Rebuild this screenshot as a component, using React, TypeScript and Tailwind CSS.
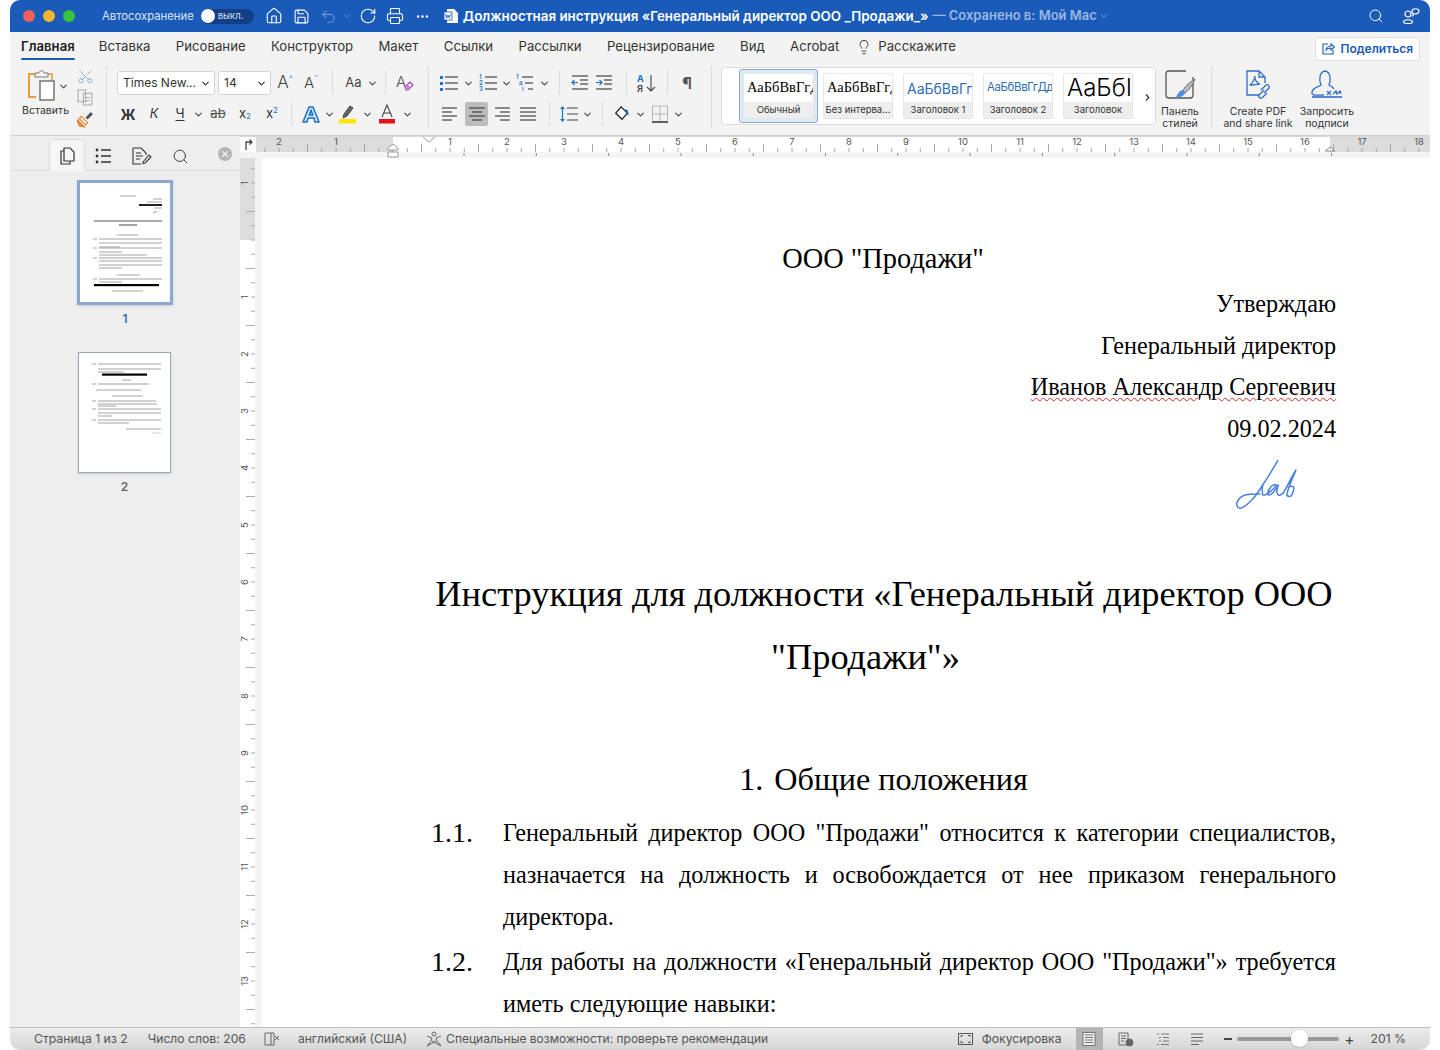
import React from 'react';
import { Home, Save, Undo2, RotateCw, Printer, MoreHorizontal, Search, ChevronDown, ChevronRight, Scissors, Lightbulb, X } from 'lucide-react';

const ui = "font-['Inter',sans-serif]";

const Chev = ({ className = 'w-[12px]' }: { className?: string }) => (
  <div className={`flex justify-center shrink-0 ${className}`}>
    <ChevronDown size={11} strokeWidth={2.4} className="text-[#444] shrink-0" />
  </div>
);

const Sep = ({ className = 'w-[18px]' }: { className?: string }) => (
  <div className={`flex justify-center shrink-0 ${className}`}>
    <div className="w-px h-[24px] bg-[#dcdcdc]" />
  </div>
);

const Cell = ({ className, children }: { className: string; children: React.ReactNode }) => (
  <div className={`flex items-center justify-center shrink-0 h-[24px] ${className}`}>{children}</div>
);

const Lines = ({ rows, children }: { rows: number[][]; children?: React.ReactNode }) => (
  <svg width="20" height="18" viewBox="0 0 20 18" fill="none" stroke="#444" strokeWidth="1.2">
    {rows.map((r, i) => (
      <line key={i} x1={r[0]} x2={r[1]} y1={r[2]} y2={r[2]} />
    ))}
    {children}
  </svg>
);

const Signature = () => (
  <svg width="70" height="56" viewBox="0 0 70 56" fill="none" stroke="#4a80e0" strokeWidth="1.5" strokeLinecap="round" strokeLinejoin="round">
    <path d="M47.7 2.7C43 11 38 19 32.7 27C29 33 26 38 21.7 42C17 47 13 50 10 50.3C7 50 6 46 7.3 43.7C9 40 12 38 15 37C20 36 25 36 30 36" />
    <path d="M32.7 27C32 31 32 35 33 37C36 38 44 31 46.7 27C44 26 41 28 40 30.3C38 33 37 36 38.3 37C41 38 46 32 48.3 27C47 31 46 36 48.3 37C50 38 52 36 53.3 35C57 29 62 18 66 12C63 19 58 30 56.7 37C58 39 61 39 61.7 37C63 34 65 31 63.3 28.7C62 28 60 28 58.3 29.3" />
  </svg>
);

const Ruler = () => {
  const labels: [number, string][] = [[-2, '2'], [-1, '1']];
  for (let i = 1; i <= 18; i++) labels.push([i, String(i)]);
  const ticks = [];
  for (let i = -9; i <= 72; i++) {
    const x = 135 + i * 14.25;
    ticks.push(i % 4 !== 0 && i % 2 === 0
      ? <line key={i} x1={x} x2={x} y1="7" y2="15" stroke="#a8a8a8" />
      : <line key={i} x1={x} x2={x} y1="11" y2="15" stroke="#a8a8a8" />);
  }
  const stops = [];
  for (let i = 0; i < 13; i++) {
    const x = 206 + i * 72.3;
    stops.push(<line key={i} x1={x} x2={x} y1="16" y2="19" stroke="#8a8a8a" />);
  }
  return (
    <svg width="1174" height="21" viewBox="-2 0 1174 21" className="block">
      <rect x="-2" width="1174" height="21" fill="#f3f3f3" />
      <rect x="-2" width="137" height="15" fill="#dcdcdc" />
      <rect x="135" width="937" height="15" fill="#fff" />
      <rect x="1072" width="100" height="15" fill="#dcdcdc" />
      {ticks}
      {stops}
      {labels.map(([n, t]) => (
        <text key={t + n} x={135 + n * 57} y="8" textAnchor="middle" fontSize="9.5" fill="#555" fontFamily="Inter, sans-serif">{t}</text>
      ))}
      <path d="M130 11L135 7L140 11V13H130Z M130 15H140V20H130Z" fill="#fff" stroke="#999" />
      <path d="M165 0L171 5L177 0" fill="#fff" stroke="#999" />
      <path d="M1067 14L1072 10L1077 14Z" fill="#fff" stroke="#888" />
    </svg>
  );
};

const VRuler = () => {
  const ticks = [];
  for (let i = -5; i <= 56; i++) {
    const y = 82 + i * 14.25;
    ticks.push(i % 4 !== 0 && i % 2 === 0
      ? <line key={i} x1="6" x2="15" y1={y} y2={y} stroke="#a8a8a8" />
      : <line key={i} x1="11" x2="15" y1={y} y2={y} stroke="#a8a8a8" />);
  }
  const labels: [number, string][] = [[-1, '1']];
  for (let i = 1; i <= 13; i++) labels.push([i, String(i)]);
  return (
    <svg width="22" height="870" viewBox="0 0 22 870" className="block">
      <rect width="22" height="870" fill="#f3f3f3" />
      <rect x="0" width="15" height="870" fill="#fff" />
      <rect x="0" width="15" height="82" fill="#dcdcdc" />
      {ticks}
      {labels.map(([n, t]) => (
        <text key={n} x="0" y="0" textAnchor="middle" fontSize="9.5" fill="#555" fontFamily="Inter, sans-serif" transform={`translate(8 ${82 + n * 57}) rotate(-90)`}>{t}</text>
      ))}
    </svg>
  );
};

// thumbnail rows: x1, x2, y
const page1Rows = [
  [40, 56, 13], [73, 82, 16], [67, 82, 19], [74, 82, 25], [37, 58, 52],
  [19, 82, 56], [19, 82, 60], [19, 40, 64], [19, 82, 65], [19, 42, 69], [19, 67, 72], [19, 82, 75], [19, 82, 78], [19, 82, 82], [19, 42, 85],
  [37, 60, 92], [19, 82, 96], [19, 42, 99], [32, 63, 108],
  [13, 17, 56], [13, 17, 65], [13, 17, 75], [13, 17, 96],
];

const page2Rows = [
  [19, 82, 11], [19, 82, 16], [19, 45, 19], [43, 52, 27], [19, 70, 31], [17, 62, 37], [33, 64, 43],
  [19, 77, 48], [19, 78, 51], [19, 37, 53], [19, 82, 56], [19, 82, 60], [19, 33, 63], [19, 82, 67], [19, 50, 70], [47, 82, 76],
  [13, 17, 11], [13, 17, 31], [13, 17, 48], [13, 17, 56], [13, 17, 67],
];

const Thumb1 = () => (
  <svg width="90" height="119" viewBox="0 0 90 119" className="block">
    <rect width="90" height="119" fill="#fff" />
    <g stroke="#9a9a9a" strokeWidth="0.9">
      {page1Rows.map((r, i) => <line key={i} x1={r[0]} x2={r[1]} y1={r[2]} y2={r[2]} />)}
    </g>
    <g stroke="#555" strokeWidth="1.1">
      <line x1="14" x2="82" y1="38" y2="38" />
      <line x1="39" x2="57" y1="42" y2="42" />
    </g>
    <rect x="59" y="21" width="23" height="2" fill="#222" />
    <rect x="14" y="101" width="65" height="2.2" fill="#000" />
    <path d="M73 30L77 28" stroke="#7fa3e4" />
  </svg>
);

const Thumb2 = () => (
  <svg width="91" height="119" viewBox="0 0 91 119" className="block">
    <rect width="91" height="119" fill="#fff" />
    <g stroke="#9a9a9a" strokeWidth="0.9">
      {page2Rows.map((r, i) => <line key={i} x1={r[0]} x2={r[1]} y1={r[2]} y2={r[2]} />)}
      <line x1="73" x2="82" y1="80" y2="80" stroke="#ccc" />
    </g>
    <rect x="23" y="20.5" width="45" height="2.2" fill="#000" />
  </svg>
);

const GalleryItem = ({ label, children, selected }: { label: string; children: React.ReactNode; selected?: boolean }) => (
  <div className={selected ? 'w-[79px] h-[54px] p-[3px] rounded-[3px] border border-[#8aaad6] bg-[#dfe8f4] shrink-0' : 'w-[70px] h-[46px] mt-[4px] shrink-0'}>
    <div className="h-full flex flex-col rounded-[2px] overflow-hidden bg-white border border-[#e6e6e6]">
      <div className="flex-1 min-h-0 flex items-center pl-[3px] overflow-hidden whitespace-nowrap">{children}</div>
      <div className={`h-[16px] bg-[#eeeeee] text-center text-[9.5px] leading-[16px] text-[#333] whitespace-nowrap ${ui}`}>{label}</div>
    </div>
  </div>
);

const tabs = ['Вставка', 'Рисование', 'Конструктор', 'Макет', 'Ссылки', 'Рассылки', 'Рецензирование', 'Вид', 'Acrobat'];

const Para = ({ lines }: { lines: string[] }) => (
  <div className="flex-1 min-w-0">
    {lines.map((l, i) => (
      <div key={i} className={i < lines.length - 1 ? 'h-[42px] [text-align:justify] [text-align-last:justify]' : 'h-[42px]'}>{l}</div>
    ))}
  </div>
);

export default function App() {
  return (
    <div className="w-[1440px] h-[1050px] bg-white px-[10px] overflow-hidden">
      <div className={`h-full flex flex-col text-[#333] ${ui}`}>
        {/* title bar */}
        <div className="h-[32px] bg-[#1a5ab8] rounded-t-[10px] flex items-center text-white shrink-0 pl-[13px] pr-[10px]">
          <div className="w-[12px] h-[12px] rounded-full bg-[#f2605a]" />
          <div className="w-[12px] h-[12px] rounded-full bg-[#f6b52f] ml-[8px]" />
          <div className="w-[12px] h-[12px] rounded-full bg-[#3cc23f] ml-[8px]" />
          <span className="ml-[27px] text-[11.3px] text-[#dbe6f6]">Автосохранение</span>
          <div className="ml-[7px] w-[53px] h-[15px] rounded-full bg-[#123f85] flex items-center">
            <div className="w-[14px] h-[14px] rounded-full bg-white" />
            <span className="ml-[3px] text-[9.5px] text-[#d5e0f2]">выкл.</span>
          </div>
          <Home size={18} strokeWidth={1.5} className="ml-[11px]" />
          <Save size={17} strokeWidth={1.5} className="ml-[10px]" />
          <Undo2 size={17} strokeWidth={1.5} className="ml-[10px] text-[#6e96d4]" />
          <ChevronDown size={10} className="ml-[5px] text-[#6e96d4]" />
          <RotateCw size={18} strokeWidth={1.5} className="ml-[7px]" />
          <Printer size={18} strokeWidth={1.5} className="ml-[9px]" />
          <MoreHorizontal size={15} className="ml-[11px]" />
          <svg width="14" height="14" viewBox="0 0 14 14" className="ml-[14px] shrink-0">
            <path d="M3 0H10L14 4V14H3Z" fill="#fff" />
            <rect x="0" y="3" width="8" height="8" fill="#fff" stroke="#1a5ab8" strokeWidth="0.8" />
            <path d="M1.5 5L2.7 9L4 6L5.3 9L6.5 5" fill="none" stroke="#1a5ab8" strokeWidth="0.9" />
          </svg>
          <span className="ml-[5px] text-[13.4px] font-semibold whitespace-nowrap">Должностная инструкция «Генеральный директор ООО _Продажи_»</span>
          <span className="ml-[4px] text-[13px] font-semibold text-[#9ab8e4] whitespace-nowrap">— Сохранено в: Мой Мас</span>
          <ChevronDown size={10} className="ml-[2px] text-[#9ab8e4]" />
          <div className="flex-1" />
          <Search size={16} strokeWidth={1.5} className="-ml-px" />
          <svg width="18" height="18" viewBox="0 0 18 18" fill="none" stroke="#fff" strokeWidth="1.2" className="ml-[18px]">
            <circle cx="6" cy="7" r="3" />
            <path d="M1.5 15C1.5 12 10.5 12 10.5 15C10.5 17 1.5 17 1.5 15Z" />
            <path d="M10 4C10 1 17 1 17 4C17 7 13 7 12 7L11 8.5V6.5C10.5 6 10 5 10 4Z" />
          </svg>
        </div>

        {/* tabs + ribbon */}
        <div className="h-[104px] bg-[#f3f3f3] border-b border-[#d0d0d0] shrink-0">
          <div className="h-[32px] flex items-center pl-[11px] pr-[10px] text-[13.2px]">
            <div className="flex items-center -mt-[2px]">
              <div className="relative font-semibold text-[#222]">
                Главная
                <div className="absolute left-0 right-0 top-[21px] h-[2px] rounded bg-[#1a5ab8]" />
              </div>
              {tabs.map((t, i) => (
                <span key={t} className={`text-[#333] whitespace-nowrap ${i === 0 ? 'ml-[24px]' : 'ml-[25.3px]'}`}>{t}</span>
              ))}
              <Lightbulb size={16} strokeWidth={1.3} className="ml-[17px]" />
              <span className="ml-[6px] whitespace-nowrap">Расскажите</span>
            </div>
            <div className="flex-1" />
            <div className="h-[24px] mt-[1px] px-[6px] flex items-center gap-[5px] bg-white border border-[#dedede] rounded-[3px] text-[12px] font-semibold text-[#1a5ab8]">
              <svg width="13" height="13" viewBox="0 0 13 13" fill="none" stroke="#1a5ab8" strokeWidth="1.1">
                <path d="M6 2H1V12H11V8" />
                <path d="M4 8C4 5 7 4 9 4V2L12.5 5L9 8V6C7 6 5 6.5 4 8Z" />
              </svg>
              <span className="mt-[1px]">Поделиться</span>
            </div>
          </div>

          <div className="flex h-[70px] pt-[2px]">
            {/* paste group */}
            <div className="w-[96px] shrink-0 flex">
              <div className="w-[65px] pl-[12px] pt-[4px]">
                <div className="flex items-center">
                  <svg width="30" height="31" viewBox="0 0 30 31" fill="none" className="ml-[5px] shrink-0">
                    <path d="M9 4H2V27H9" stroke="#ee9c3a" strokeWidth="2" />
                    <path d="M20 4H25V10" stroke="#ee9c3a" strokeWidth="1.6" />
                    <path d="M8 6V3H12C12 0 17 0 17 3H21V7H8Z" fill="#f3f3f3" stroke="#777" />
                    <rect x="13" y="11" width="14" height="19" fill="#fff" stroke="#555" strokeWidth="1.2" />
                  </svg>
                  <ChevronDown size={11} strokeWidth={2.4} className="ml-[1px] mt-[2px] text-[#444] shrink-0" />
                </div>
                <div className="mt-[2px] text-[10.6px] whitespace-nowrap">Вставить</div>
              </div>
              <div className="flex flex-col items-center w-[20px] pt-[2px] gap-[4px]">
                <Scissors size={17} strokeWidth={1.2} className="text-[#8ba6c6] -rotate-90" />
                <svg width="17" height="17" viewBox="0 0 16 16" fill="none" stroke="#aaa">
                  <path d="M1 1H8V12H1Z M6 4H14V15H6Z" fill="#f3f3f3" />
                  <path d="M8 8H12M8 11H12" />
                </svg>
                <svg width="18" height="18" viewBox="0 0 17 17" fill="none">
                  <path d="M1 9L6 14L8 16L3 15Z" fill="#f0913a" stroke="#e5751d" />
                  <path d="M5 6L11 12L9 14L3 8Z" fill="#fff" stroke="#e5751d" />
                  <path d="M9 7L14 2L16 4L11 9Z" fill="#555" />
                </svg>
              </div>
            </div>
            <div className="w-px h-[62px] bg-[#dcdcdc] shrink-0" />

            {/* font group */}
            <div className="w-[321px] shrink-0 pl-[10px] pt-[5px]">
              <div className="flex h-[24px] items-center">
                <div className="w-[98px] h-[24px] bg-white border border-[#d4d4d4] rounded-[3px] flex items-center justify-between pl-[5px] pr-[3px] text-[12px] shrink-0">
                  Times New...<ChevronDown size={11} strokeWidth={2.4} />
                </div>
                <div className="w-[53px] h-[24px] ml-[3px] bg-white border border-[#d4d4d4] rounded-[3px] flex items-center justify-between pl-[5px] pr-[3px] text-[12px] shrink-0">
                  14<ChevronDown size={11} strokeWidth={2.4} />
                </div>
                <Cell className="w-[28px] text-[17px] font-light text-[#444]">A<sup className="text-[#1a73c8] text-[9px] top-[-4px]">^</sup></Cell>
                <Cell className="w-[24px] text-[15px] font-light text-[#444]">A<sup className="text-[#1a73c8] text-[9px] top-[-4px]">ˇ</sup></Cell>
                <Sep />
                <Cell className="w-[25px] text-[13px] text-[#444]">Aa</Cell>
                <Chev />
                <Sep className="w-[14px]" />
                <Cell className="w-[26px]">
                  <svg width="20" height="20" viewBox="0 0 20 20" fill="none">
                    <text x="1" y="14" fontSize="15" fill="#555" fontFamily="Inter, sans-serif" fontWeight="300">A</text>
                    <path d="M10 14L15 9L18 12L13 17H11Z" fill="#fff" stroke="#a13bb0" strokeWidth="1.2" />
                    <path d="M10 14L12.5 11.5L15.5 14.5L13 17H11Z" fill="#c987d2" />
                  </svg>
                </Cell>
              </div>
              <div className="flex h-[24px] items-center mt-[7px] text-[#333]">
                <Cell className="w-[22px] text-[14px] font-bold">Ж</Cell>
                <Cell className="w-[30px] text-[13px] italic">К</Cell>
                <Cell className="w-[22px] text-[13px] underline underline-offset-2">Ч</Cell>
                <Chev className="w-[14px]" />
                <Cell className="w-[26px] text-[13px] line-through text-[#555]">ab</Cell>
                <Cell className="w-[28px] text-[13px]">x<sub className="text-[#1a73c8] text-[8px]">2</sub></Cell>
                <Cell className="w-[26px] text-[13px]">x<sup className="text-[#1a73c8] text-[8px]">2</sup></Cell>
                <Sep className="w-[12px]" />
                <Cell className="w-[28px]">
                  <svg width="18" height="18" viewBox="0 0 18 18">
                    <path d="M7 2H11L17 17H13L12 13H6L5 17H1ZM7.2 10H10.8L9 5Z" fill="#d5e9fb" stroke="#1a6ec4" strokeWidth="1.5" strokeLinejoin="round" fillRule="evenodd" />
                  </svg>
                </Cell>
                <Chev className="w-[8px]" />
                <Cell className="w-[30px]">
                  <svg width="18" height="20" viewBox="0 0 18 20" fill="none">
                    <path d="M5 10L11 2L14 4L8 12L4 14Z" fill="#666" stroke="#444" />
                    <rect x="0" y="15" width="17" height="4.5" fill="#ffe600" />
                  </svg>
                </Cell>
                <Chev className="w-[8px]" />
                <Cell className="w-[32px]">
                  <svg width="18" height="20" viewBox="0 0 18 20" fill="none">
                    <path d="M4 13L9 1L14 13M6 9H12" stroke="#444" strokeWidth="1.1" />
                    <rect x="1" y="15" width="16" height="4.5" fill="#e8101c" />
                  </svg>
                </Cell>
                <Chev className="w-[8px]" />
              </div>
            </div>
            <div className="w-px h-[62px] bg-[#dcdcdc] shrink-0" />

            {/* paragraph group */}
            <div className="w-[282px] shrink-0 pl-[9px] pt-[5px]">
              <div className="flex h-[24px] items-center">
                <Cell className="w-[22px]">
                  <Lines rows={[[6, 19, 3], [6, 19, 9], [6, 19, 15]]}>
                    <g fill="#1a73c8" stroke="none"><rect x="1" y="2" width="3" height="3" /><rect x="1" y="8" width="3" height="3" /><rect x="1" y="14" width="3" height="3" /></g>
                  </Lines>
                </Cell>
                <Chev className="w-[16px]" />
                <Cell className="w-[24px]">
                  <Lines rows={[[7, 19, 3], [7, 19, 9], [7, 19, 15]]}>
                    <g fill="#1a73c8" stroke="none" fontSize="6" fontFamily="Inter, sans-serif" fontWeight="600"><text x="1" y="5">1</text><text x="1" y="11">2</text><text x="1" y="17">3</text></g>
                  </Lines>
                </Cell>
                <Chev />
                <Cell className="w-[26px]">
                  <Lines rows={[[7, 18, 3], [10, 18, 9], [13, 18, 15]]}>
                    <g fill="#1a73c8" stroke="none" fontSize="6" fontFamily="Inter, sans-serif" fontWeight="600"><text x="1" y="5">1</text><text x="4" y="11">a</text><text x="7" y="17">i</text></g>
                  </Lines>
                </Cell>
                <Chev />
                <Sep />
                <Cell className="w-[24px]">
                  <Lines rows={[[2, 18, 2], [10, 18, 6], [10, 18, 10], [2, 18, 15]]}>
                    <path d="M8 8.5H2M4.5 6L2 8.5L4.5 11" stroke="#1a73c8" />
                  </Lines>
                </Cell>
                <Cell className="w-[24px]">
                  <Lines rows={[[2, 18, 2], [10, 18, 6], [10, 18, 10], [2, 18, 15]]}>
                    <path d="M2 8.5H8M5.5 6L8 8.5L5.5 11" stroke="#1a73c8" />
                  </Lines>
                </Cell>
                <Sep className="w-[20px]" />
                <Cell className="w-[22px]">
                  <svg width="20" height="20" viewBox="0 0 20 20" fill="none">
                    <text x="0" y="9" fontSize="9" fontWeight="700" fill="#1a73c8" fontFamily="Inter, sans-serif">А</text>
                    <text x="0" y="19" fontSize="9" fontWeight="600" fill="#444" fontFamily="Inter, sans-serif">Я</text>
                    <path d="M14 2V18M10 14L14 18L18 14" stroke="#444" strokeWidth="1.1" />
                  </svg>
                </Cell>
                <Sep />
                <Cell className="w-[22px] text-[16px] font-bold text-[#555]">¶</Cell>
              </div>
              <div className="flex h-[24px] items-center mt-[7px]">
                <Cell className="w-[24px]"><Lines rows={[[2, 17, 3], [2, 12, 7], [2, 17, 11], [2, 12, 15]]} /></Cell>
                <Cell className="w-[23px] ml-[3px] bg-[#bcbcbc] rounded-[2px]"><Lines rows={[[2, 18, 3], [5, 15, 7], [2, 18, 11], [5, 15, 15]]} /></Cell>
                <Cell className="w-[28px]"><Lines rows={[[3, 18, 3], [8, 18, 7], [3, 18, 11], [8, 18, 15]]} /></Cell>
                <Cell className="w-[24px]"><Lines rows={[[2, 18, 3], [2, 18, 7], [2, 18, 11], [2, 18, 15]]} /></Cell>
                <Sep />
                <Cell className="w-[22px]">
                  <svg width="20" height="18" viewBox="0 0 20 18" fill="none" stroke="#444" strokeWidth="1.2">
                    <path d="M8 3H19M8 9H19M8 15H19" />
                    <path d="M3.5 2V16" stroke="#1a73c8" />
                    <path d="M1 4L3.5 1L6 4H1ZM1 14L3.5 17L6 14H1Z" fill="#1a73c8" stroke="none" />
                  </svg>
                </Cell>
                <Chev className="w-[14px]" />
                <Sep className="w-[16px]" />
                <Cell className="w-[24px]">
                  <svg width="16" height="16" viewBox="0 0 18 18" fill="none">
                    <path d="M8 1L15 8L9 15L2 8Z" fill="#fff" stroke="#222" strokeWidth="1.5" />
                    <path d="M13 3C16 4 17 8 16 11C14 9 14 6 13 3Z" fill="#1a73c8" />
                  </svg>
                </Cell>
                <Chev />
                <Cell className="w-[28px]">
                  <svg width="16" height="18" viewBox="0 0 16 18" fill="none" stroke="#b5b5b5">
                    <path d="M0.5 1H15.5M0.5 9H15.5M8 1V16M0.5 1V16M15.5 1V16" />
                    <path d="M0 17H16" stroke="#222" strokeWidth="1.4" />
                  </svg>
                </Cell>
                <Chev className="w-[8px]" />
              </div>
            </div>
            <div className="w-px h-[62px] bg-[#dcdcdc] shrink-0" />

            {/* styles gallery */}
            <div className="w-[435px] h-[58px] ml-[9px] mt-[1px] bg-white border border-[#dcdcdc] rounded-[4px] flex items-start pl-[17px] pt-[1px] shrink-0">
              <GalleryItem label="Обычный" selected>
                <span className="font-['Liberation_Serif',serif] text-[14.5px] text-black">АаБбВвГгД</span>
              </GalleryItem>
              <div className="ml-[5px]">
                <GalleryItem label="Без интерва...">
                  <span className="font-['Liberation_Serif',serif] text-[14.5px] text-black">АаБбВвГгД</span>
                </GalleryItem>
              </div>
              <div className="ml-[10px]">
                <GalleryItem label="Заголовок 1">
                  <span className="text-[14px] text-[#2f6eb5]">АаБбВвГг,</span>
                </GalleryItem>
              </div>
              <div className="ml-[10px]">
                <GalleryItem label="Заголовок 2">
                  <span className="text-[11.5px] tracking-[-0.4px] text-[#2f6eb5]">АаБбВвГгДд</span>
                </GalleryItem>
              </div>
              <div className="ml-[10px]">
                <GalleryItem label="Заголовок">
                  <span className="text-[24px] text-black font-light">АаБбІ</span>
                </GalleryItem>
              </div>
              <ChevronRight size={11} strokeWidth={2.4} className="ml-[9px] mt-[23px] text-[#333]" />
            </div>

            <div className="w-[46px] ml-[1px] shrink-0 flex flex-col items-center pt-[3px]">
              <svg width="32" height="31" viewBox="0 0 32 31" fill="none">
                <path d="M22 2H5C3 2 2 3 2 5V26C2 28 3 29 5 29H26C28 29 29 28 29 26V8" stroke="#555" strokeWidth="1.3" />
                <path d="M31 10C24 14 20 19 19 22L21 24C24 22 29 16 31 10Z" fill="#bbb" stroke="#666" />
                <path d="M19 21C15 21 14 25 12 28C16 29 21 27 21 23Z" fill="#4c8fdc" />
              </svg>
              <div className="mt-[6px] text-[10.5px] leading-[12px] text-center">Панель<br />стилей</div>
            </div>
            <div className="w-px h-[62px] bg-[#dcdcdc] shrink-0 ml-[8px]" />
            <div className="w-[92px] shrink-0 flex flex-col items-center pt-[3px]">
              <svg width="30" height="31" viewBox="0 0 30 31" fill="none" stroke="#2f6fc8" strokeWidth="1.3">
                <path d="M16 26H4V2H16L22 8V14M16 2V8H22" />
                <path d="M7 16C10 14 12 9 12 7C11 11 15 15 17 15C13 15 9 17 7 16Z" />
                <path d="M18 21L23 16C25 15 27 17 26 19L21 24M21 21L16 26C15 29 18 30 20 28L24 24" />
              </svg>
              <div className="mt-[6px] text-[10.5px] leading-[12px] text-center whitespace-nowrap">Create PDF<br />and share link</div>
            </div>
            <div className="w-[46px] shrink-0 flex flex-col items-center pt-[3px]">
              <svg width="34" height="31" viewBox="0 0 34 31" fill="none" stroke="#2f6fc8" strokeWidth="1.3" className="shrink-0">
                <path d="M2 23C3 18 9 18 11 16C9 11 9 3 15 2C21 3 21 11 19 16C21 17 23 18 24 20" />
                <path d="M2 23C1 27 6 26 14 26" />
                <path d="M2 28H32" strokeWidth="1.6" />
                <path d="M17 22L21 26M21 22L17 26M23 25L26 22L27 25L30 22L31 25" />
              </svg>
              <div className="mt-[6px] text-[10.5px] leading-[12px] text-center whitespace-nowrap">Запросить<br />подписи</div>
            </div>
          </div>
        </div>

        {/* main */}
        <div className="flex-1 min-h-0 flex">
          <div className="w-[230px] shrink-0 bg-[#eeeeee] flex flex-col">
            <div className="h-[35px] border-b border-[#dcdcdc] flex items-end relative shrink-0">
              <div className="ml-[39px] w-[36px] h-[32px] -mb-px bg-[#f6f6f6] border border-[#dcdcdc] border-b-0 rounded-t-[3px] flex items-center justify-center">
                <svg width="18" height="18" viewBox="0 0 18 18" fill="none" stroke="#333" strokeWidth="1.2">
                  <path d="M6 1H12L16 5V14H6Z" />
                  <path d="M6 4H3V17H12V14" />
                </svg>
              </div>
              <div className="absolute left-[85px] top-[11px] flex items-center gap-[20px]">
                <svg width="17" height="16" viewBox="0 0 17 16" stroke="#333" strokeWidth="1.3" fill="#333">
                  <circle cx="2" cy="2" r="1.4" stroke="none" /><circle cx="2" cy="8" r="1.4" stroke="none" /><circle cx="2" cy="14" r="1.4" stroke="none" />
                  <path d="M6 2H16M6 8H16M6 14H16" />
                </svg>
                <svg width="20" height="18" viewBox="0 0 20 18" fill="none" stroke="#333" strokeWidth="1.1">
                  <path d="M1 1H9L14 6V8M1 1V17H9M4 6H9M4 9H11M4 12H8" />
                  <path d="M11 15L17 8L19 10L13 16L11 16.5Z" />
                </svg>
                <Search size={17} strokeWidth={1.3} className="text-[#333]" />
              </div>
              <div className="absolute left-[208px] top-[11px] w-[14px] h-[14px] rounded-full bg-[#b4b4b4] flex items-center justify-center">
                <X size={10} strokeWidth={3} className="text-[#eee]" />
              </div>
            </div>
            <div className="pl-[67px] pt-[9px]">
              <div className="w-[96px] border-[3px] border-[#8aa8d0] shadow-sm"><Thumb1 /></div>
              <div className="w-[96px] mt-[5px] text-center text-[12px] font-semibold text-[#3f6fb0]">1</div>
            </div>
            <div className="pl-[68px] pt-[24px]">
              <div className="w-[93px] border border-[#9aa6b4] shadow-sm"><Thumb2 /></div>
              <div className="w-[93px] mt-[5px] text-center text-[12px] font-semibold text-[#666]">2</div>
            </div>
          </div>

          <div className="flex-1 min-w-0 flex flex-col border-t border-[#d8d8d8]">
            <div className="flex shrink-0">
              <div className="w-[16px] h-[21px] bg-[#f3f3f3]">
                <div className="h-[15px] bg-white flex items-center justify-center">
                  <svg width="9" height="11" viewBox="0 0 9 11" fill="none" stroke="#444" strokeWidth="1.3">
                    <path d="M2 11V3H8M5.5 0.5L8 3L5.5 5.5" />
                  </svg>
                </div>
              </div>
              <Ruler />
            </div>
            <div className="flex-1 min-h-0 flex">
              <div className="w-[22px] shrink-0 overflow-hidden"><VRuler /></div>
              <div className="flex-1 min-w-0 bg-white overflow-hidden pt-[80px] pl-[170px] pr-[94px] font-['Liberation_Serif',serif] text-[24.2px] text-black">
                <div className="text-center text-[28.4px] leading-[42px] -ml-[2px]">ООО "Продажи"</div>
                <div className="mt-[3px] text-right leading-[41.7px]">
                  <div>Утверждаю</div>
                  <div>Генеральный директор</div>
                  <div className="underline decoration-wavy decoration-[#d42a2a] decoration-1 underline-offset-2">Иванов Александр Сергеевич</div>
                  <div>09.02.2024</div>
                </div>
                <div className="flex justify-end pr-[36px] mt-[8px] mb-[49px]"><Signature /></div>
                <div className="text-center text-[36.4px] leading-[63px] whitespace-nowrap">
                  <div>Инструкция для должности «Генеральный директор ООО</div>
                  <div className="pr-[37px]">"Продажи"»</div>
                </div>
                <div className="mt-[69px] flex justify-center text-[32.2px] leading-[42px] -ml-[1px]">
                  <span>1.</span>
                  <span className="ml-[11px]">Общие положения</span>
                </div>
                <div className="mt-[12px] leading-[42px]">
                  <div className="flex">
                    <div className="w-[72px] -ml-[1px] shrink-0 text-[28px]">1.1.</div>
                    <Para lines={['Генеральный директор ООО "Продажи" относится к категории специалистов,', 'назначается на должность и освобождается от нее приказом генерального', 'директора.']} />
                  </div>
                  <div className="flex mt-[3px]">
                    <div className="w-[72px] -ml-[1px] shrink-0 text-[28px]">1.2.</div>
                    <Para lines={['Для работы на должности «Генеральный директор ООО "Продажи"» требуется', 'иметь следующие навыки:']} />
                  </div>
                </div>
              </div>
            </div>
          </div>
        </div>

        {/* status bar */}
        <div className="h-[23px] shrink-0 rounded-b-[10px] border-t border-[#bdbdbd] bg-gradient-to-b from-[#ececec] to-[#d6d6d6] flex items-center pl-[24px] text-[12.2px] text-[#555] whitespace-nowrap overflow-hidden">
          <span>Страница 1 из 2</span>
          <span className="ml-[20px]">Число слов: 206</span>
          <svg width="16" height="14" viewBox="0 0 16 14" fill="none" stroke="#666" className="ml-[18px]">
            <path d="M1 1H7V13H1ZM7 1H10V13H7M11 4L15 8M15 4L11 8" />
          </svg>
          <span className="ml-[18px] text-[12.1px]">английский (США)</span>
          <svg width="16" height="16" viewBox="0 0 16 16" fill="none" stroke="#666" className="ml-[19px]">
            <circle cx="8" cy="3" r="2" />
            <path d="M1 5L6 7L5 10L1 15M15 5L10 7L11 10L15 15M6 10L15 15M10 10L1 15" />
          </svg>
          <span className="ml-[4px] text-[12px]">Специальные возможности: проверьте рекомендации</span>
          <div className="flex-1" />
          <svg width="15" height="12" viewBox="0 0 15 12" fill="none" stroke="#555">
            <rect x="0.5" y="0.5" width="14" height="11" />
            <path d="M3 4V2.5H5M10 2.5H12V4M12 8V9.5H10M5 9.5H3V8" />
          </svg>
          <span className="ml-[9px]">Фокусировка</span>
          <div className="ml-[14px] w-[27px] h-[23px] bg-[#b4b4b4] flex items-center justify-center">
            <svg width="14" height="14" viewBox="0 0 14 14" fill="#eee" stroke="#777">
              <rect x="1" y="0.5" width="12" height="13" />
              <path d="M3 3H11M3 5.5H11M3 8H11M3 10.5H11" />
            </svg>
          </div>
          <svg width="16" height="15" viewBox="0 0 16 15" fill="none" stroke="#666" className="ml-[15px]">
            <path d="M1 1H10V13H1ZM3 4H8M3 6.5H8M3 9H6" />
            <circle cx="11.5" cy="10.5" r="3.5" fill="#666" />
          </svg>
          <svg width="14" height="13" viewBox="0 0 14 13" stroke="#777" className="ml-[22px]">
            <path d="M1 1H3M5 1H13M3 4.5H5M7 4.5H13M3 8H5M7 8H13M1 11.5H3M5 11.5H13" />
          </svg>
          <svg width="14" height="13" viewBox="0 0 14 13" stroke="#666" className="ml-[20px]">
            <path d="M1 1H13M1 4.5H13M1 8H13M1 11.5H9" />
          </svg>
          <span className="ml-[20px] w-[8px] h-[2px] bg-[#444]" />
          <div className="ml-[5px] w-[102px] h-[4px] rounded-full bg-[#9a9a9a] relative">
            <div className="absolute left-[54px] top-[-7px] w-[17px] h-[17px] rounded-full bg-white shadow" />
          </div>
          <span className="ml-[6px] text-[15px] leading-none text-[#444]">+</span>
          <span className="ml-[16px] mr-[24px]">201 %</span>
        </div>
      </div>
    </div>
  );
}
